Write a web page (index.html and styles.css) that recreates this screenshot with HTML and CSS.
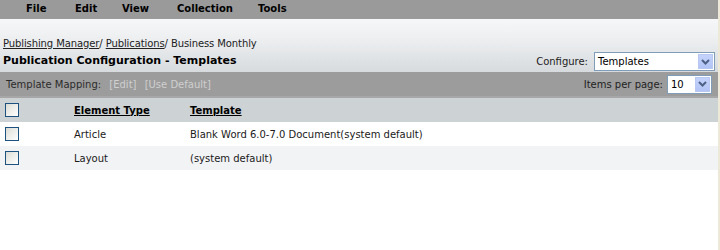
FILE: index.html
```html
<!DOCTYPE html>
<html lang="en">
<head>
  <meta charset="UTF-8" />
  <title>Publication Configuration - Templates</title>
  <link rel="stylesheet" href="styles.css">
</head>
<body>
  <div class="page">
    <div class="menubar">
      <span class="menu m-file">File</span>
      <span class="menu m-edit">Edit</span>
      <span class="menu m-view">View</span>
      <span class="menu m-coll">Collection</span>
      <span class="menu m-tools">Tools</span>
    </div>

    <div class="header">
      <div class="header-left">
        <div class="crumbs">
          <a href="#">Publishing Manager</a>/ <a href="#">Publications</a>/ Business Monthly
        </div>
        <h1>Publication Configuration - Templates</h1>
      </div>
      <div class="configure">
        <label>Configure:</label>
        <div class="select wide">
          <span>Templates</span>
          <span class="arrow"><svg width="9" height="6" viewBox="0 0 9 6"><path d="M1 1 L4.5 4.5 L8 1" fill="none" stroke="#4d6185" stroke-width="2"/></svg></span>
        </div>
      </div>
    </div>

    <div class="toolbar">
      <div class="mapping">
        Template Mapping:
        <span class="action">[Edit]</span>
        <span class="action">[Use Default]</span>
      </div>
      <div class="perpage">
        <label>Items per page:</label>
        <div class="select narrow">
          <span>10</span>
          <span class="arrow"><svg width="9" height="6" viewBox="0 0 9 6"><path d="M1 1 L4.5 4.5 L8 1" fill="none" stroke="#4d6185" stroke-width="2"/></svg></span>
        </div>
      </div>
    </div>

    <table class="grid">
      <tr class="head">
        <td class="cb"><span class="box"></span></td>
        <td class="type"><u>Element Type</u></td>
        <td><u>Template</u></td>
      </tr>
      <tr>
        <td class="cb"><span class="box"></span></td>
        <td class="type">Article</td>
        <td>Blank Word 6.0-7.0 Document(system default)</td>
      </tr>
      <tr class="alt">
        <td class="cb"><span class="box"></span></td>
        <td class="type">Layout</td>
        <td>(system default)</td>
      </tr>
    </table>
  </div>
</body>
</html>
```

FILE: styles.css
```css
body {
  margin: 0;
  font-family: "DejaVu Sans", sans-serif;
  font-size: 10px;
  color: #1a1a1a;
  background: #fff;
}
.page {
  width: 718px;
  min-height: 250px;
  border-right: 2px solid #ece9d8;
}
.menubar {
  height: 19px;
  background: #9a9a9a;
  position: relative;
  font-weight: bold;
  font-size: 10px;
  color: #000;
}
.menu {
  position: absolute;
  top: 3px;
}
.m-file { left: 26px; }
.m-edit { left: 75px; }
.m-view { left: 122px; }
.m-coll { left: 177px; }
.m-tools { left: 258px; }

.header {
  height: 53px;
  background: linear-gradient(#f6f7f8, #eceef0 40%, #d7dbdd);
  display: flex;
  justify-content: space-between;
  align-items: flex-end;
}
.header-left {
  padding-left: 3px;
  padding-bottom: 5px;
}
.crumbs {
  color: #222;
  margin-bottom: 5px;
  letter-spacing: -0.1px;
}
.crumbs a {
  color: #222;
}
h1 {
  margin: 0;
  font-size: 11px;
  font-weight: bold;
  color: #000;
}
.configure {
  display: flex;
  align-items: center;
  gap: 6px;
  padding-right: 3px;
  padding-bottom: 1px;
}
.configure label, .perpage label {
  color: #222;
}
.select {
  display: flex;
  align-items: center;
  justify-content: space-between;
  background: #fff;
  border: 1px solid #7f9db9;
  height: 19px;
  box-sizing: border-box;
  padding-left: 3px;
  color: #000;
}
.select.wide { width: 121px; }
.select.narrow { width: 45px; }
.arrow {
  width: 15px;
  height: 15px;
  margin-right: 1px;
  background: linear-gradient(#c4d3fb, #b2c4f6);
  border: 1px solid #b8c8f0;
  box-sizing: border-box;
  display: flex;
  align-items: center;
  justify-content: center;
}
.toolbar {
  height: 24px;
  background: #9c9c9c;
  display: flex;
  justify-content: space-between;
  align-items: center;
  border-bottom: 2px solid #a7a7a7;
}
.mapping {
  padding-left: 6px;
  color: #2b2b2b;
}
.action {
  color: #cfcfcf;
  margin-left: 5px;
}
.perpage {
  display: flex;
  align-items: center;
  gap: 4px;
  padding-right: 6px;
}
.grid {
  width: 100%;
  border-collapse: collapse;
}
.grid td {
  height: 24px;
  padding: 0;
  vertical-align: middle;
}
.grid .head {
  background: #cdd2d4;
  font-weight: bold;
  color: #000;
}
.grid .alt {
  background: #f2f3f5;
}
.cb {
  width: 69px;
  padding-left: 5px !important;
}
.type {
  width: 116px;
}
.box {
  display: block;
  width: 12px;
  height: 12px;
  border: 1px solid #1c5180;
  background: linear-gradient(135deg, #dcdcd6, #fff);
}
```
